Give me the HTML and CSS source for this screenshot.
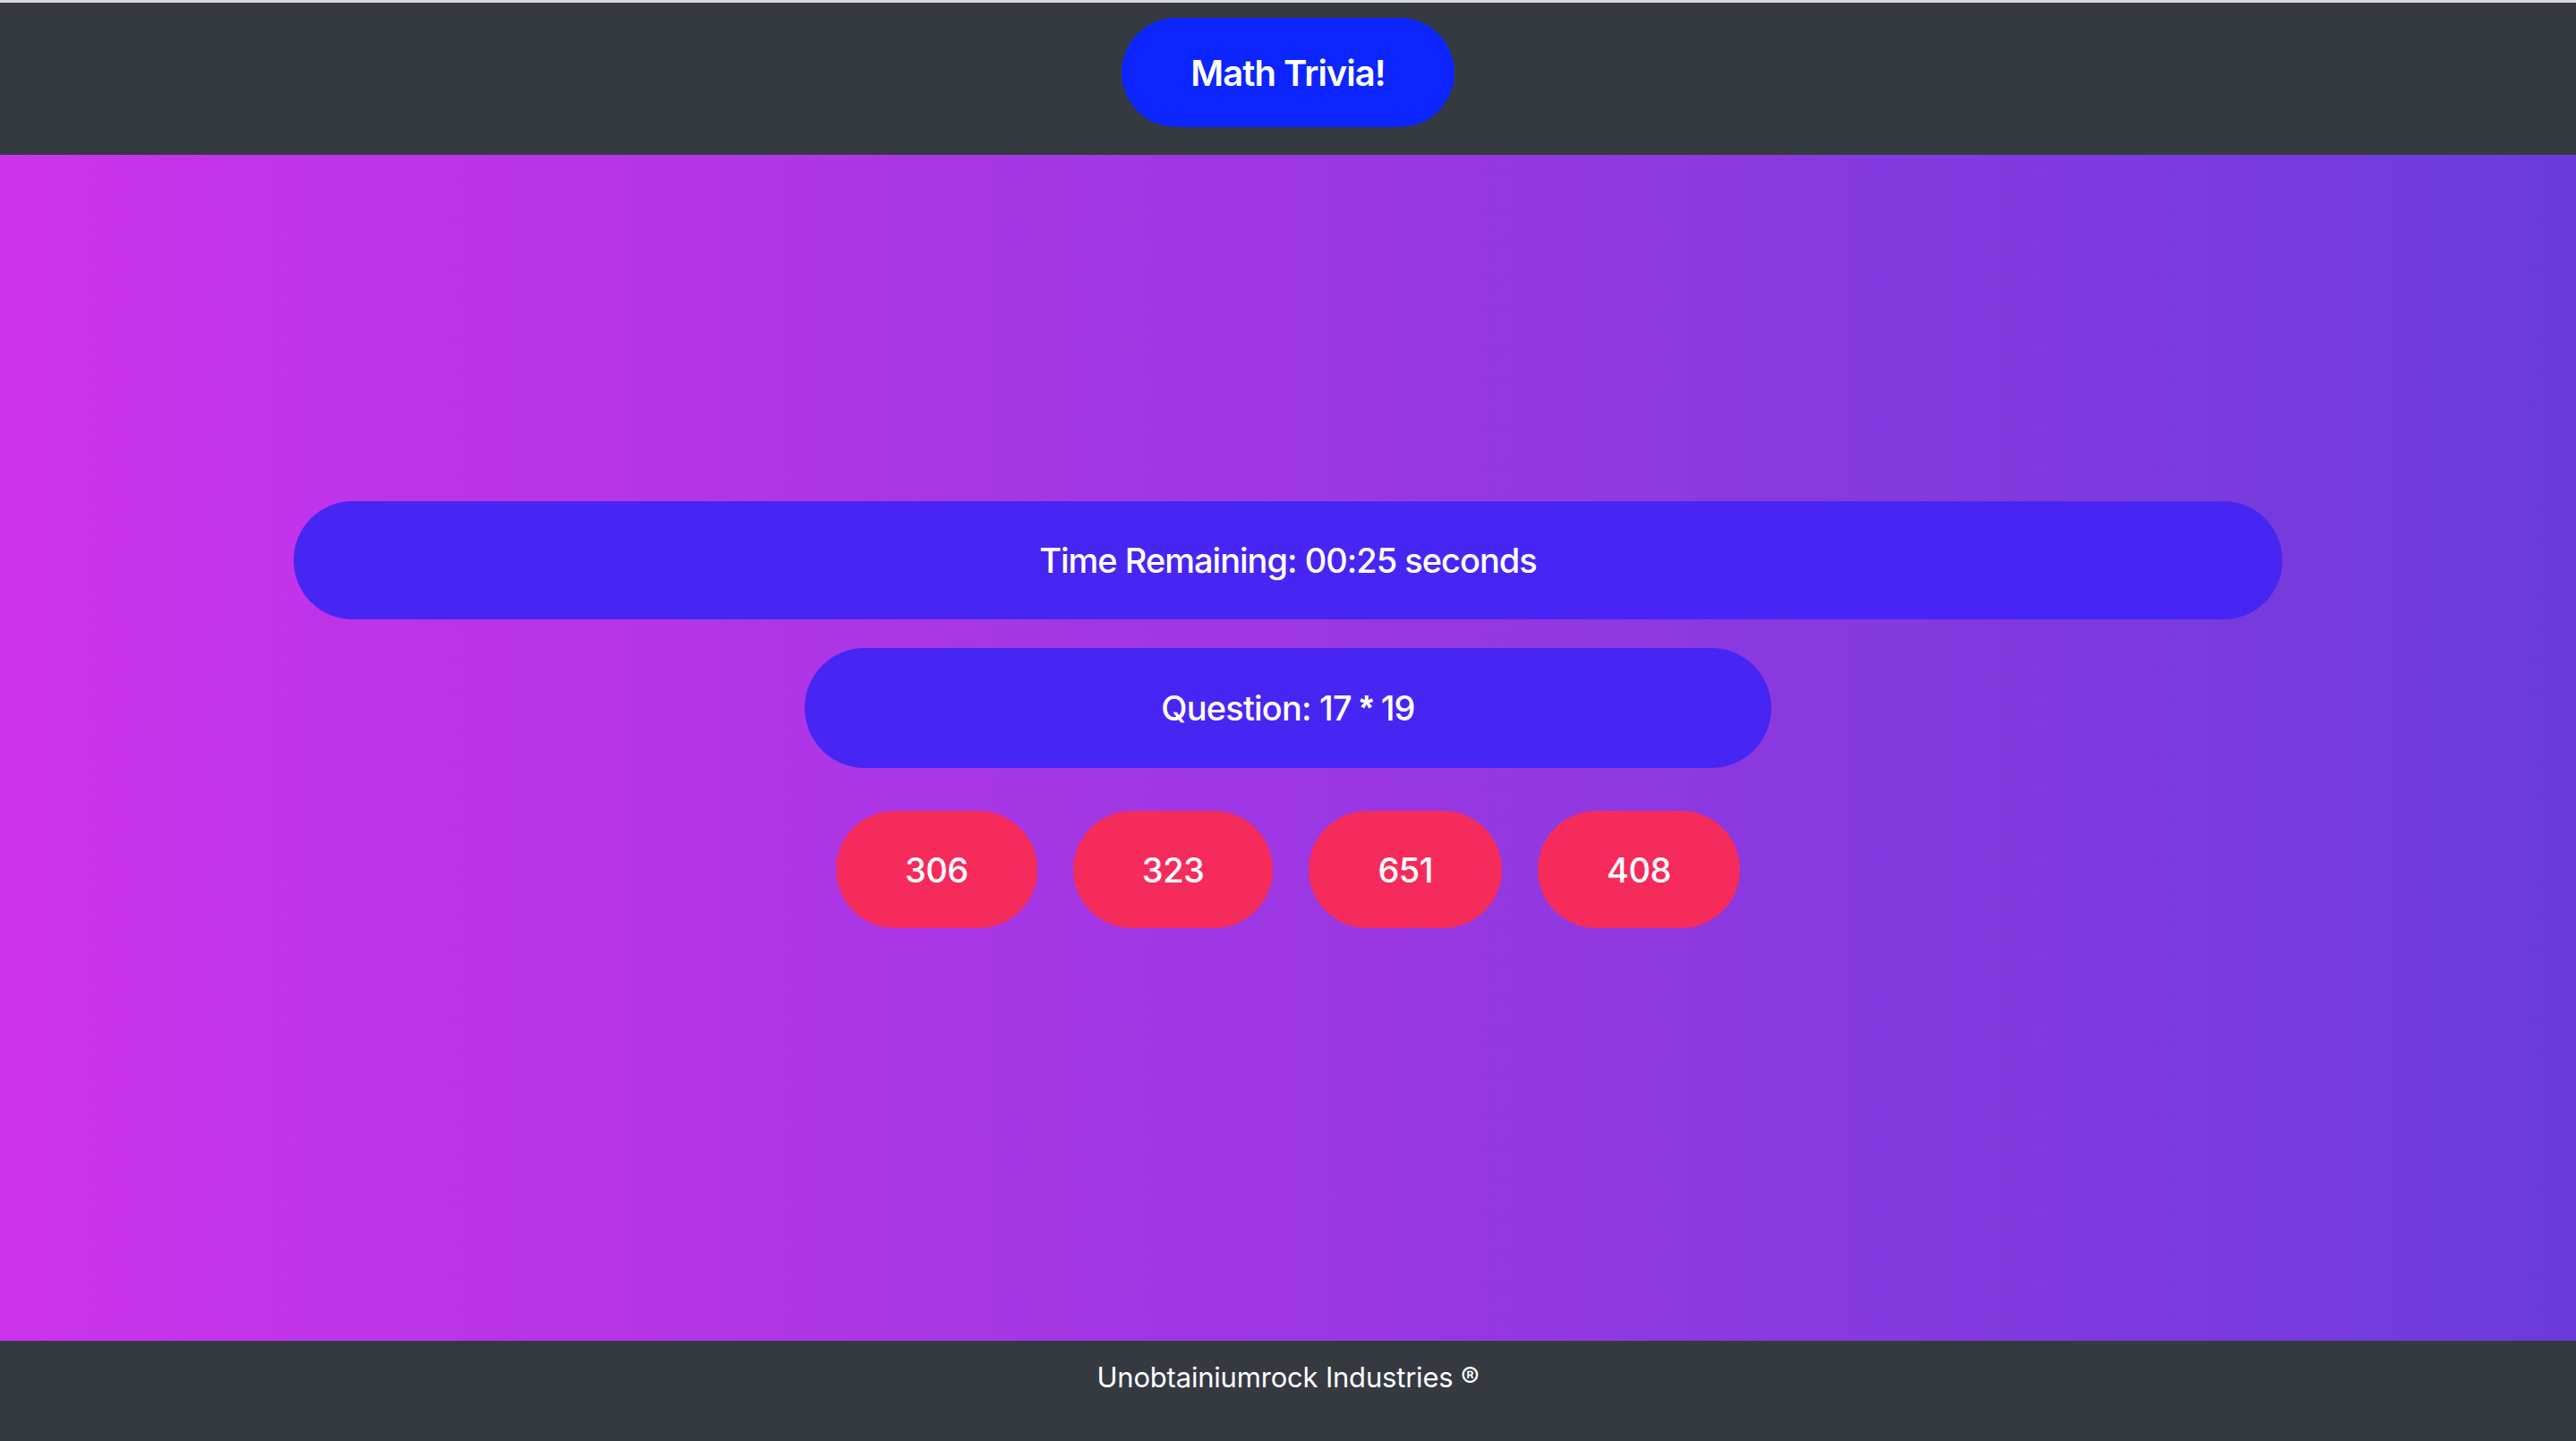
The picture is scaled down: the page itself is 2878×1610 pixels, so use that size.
FILE: index.html
```html
<!DOCTYPE html>
<html lang="en">
<head>
<meta charset="utf-8">
<title>Math Trivia!</title>
<link rel="stylesheet" href="styles.css">
</head>
<body>
<div class="page">
  <div class="topline"></div>
  <header class="header">
    <button class="title-btn">Math Trivia!</button>
  </header>
  <main class="main">
    <div class="timer">Time Remaining: 00:25 seconds</div>
    <div class="question">Question: 17 <span class="star">*</span> 19</div>
    <div class="answers">
      <button class="answer">306</button>
      <button class="answer">323</button>
      <button class="answer">651</button>
      <button class="answer">408</button>
    </div>
  </main>
  <footer class="footer">Unobtainiumrock Industries ®</footer>
</div>
</body>
</html>
```
FILE: styles.css
```css
* { box-sizing: border-box; }
html, body { margin: 0; padding: 0; height: 100%; }
body {
  font-family: "Inter", "Noto Sans", "Liberation Sans", sans-serif;
  color: #fff;
}
.page {
  display: flex;
  flex-direction: column;
  height: 100vh;
}
.topline {
  height: 3px;
  background: #d8d8d8;
}
.header {
  height: 170px;
  background: #353a41;
  display: flex;
  justify-content: center;
  padding-top: 17px;
}
.title-btn {
  width: 372px;
  height: 122px;
  border: none;
  border-radius: 61px;
  background: #0c25fe;
  color: #fff;
  font-family: inherit;
  font-size: 40px;
  font-weight: 600;
  letter-spacing: -1px;
}
.main {
  flex: 1;
  background: linear-gradient(to right, #cc33eb, #6c3bdb);
  display: flex;
  flex-direction: column;
  align-items: center;
  padding-top: 387px;
}
.timer {
  width: 2222px;
  height: 132px;
  border-radius: 66px;
  background: #4726f3;
  display: flex;
  align-items: center;
  justify-content: center;
  font-size: 38px;
  font-weight: 500;
  letter-spacing: -1px;
}
.question {
  margin-top: 32px;
  width: 1080px;
  height: 134px;
  border-radius: 67px;
  background: #4726f3;
  display: flex;
  align-items: center;
  justify-content: center;
  font-size: 38px;
  font-weight: 500;
  letter-spacing: -0.8px;
  white-space: pre;
}
.star {
  font-family: "Liberation Sans", sans-serif;
  font-weight: 700;
}
.answers {
  margin-top: 48px;
  display: flex;
  gap: 40px;
}
.answer {
  height: 131px;
  padding: 0 77px;
  border: none;
  border-radius: 66px;
  background: #f52b5c;
  color: #fff;
  font-family: inherit;
  font-size: 38px;
  font-weight: 500;
  letter-spacing: -0.5px;
}
.footer {
  height: 112px;
  background: #353a41;
  text-align: center;
  font-size: 31px;
  padding-top: 22px;
  letter-spacing: -0.2px;
}
```
